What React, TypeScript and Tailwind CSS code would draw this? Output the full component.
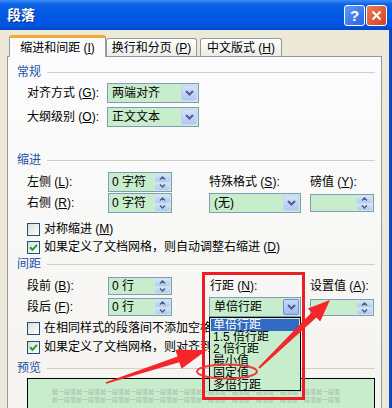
import React from "react";

const FONT = "font-['Liberation_Sans','Noto_Sans_CJK_SC',sans-serif]";

function Key({ k }: { k: string }) {
  return (
    <>
      {" "}(<span className="underline underline-offset-1">{k}</span>)
    </>
  );
}

function Section({ title, className }: { title: string; className: string }) {
  return (
    <div className={`${className} h-[16px] flex items-center pl-[9px] pr-[6px]`}>
      <span className="text-[#1f50a8] leading-none">{title}</span>
      <div className="flex-1 h-px bg-[#d0d0bf] ml-[6px]" />
    </div>
  );
}

function ComboBtn({ active }: { active?: boolean }) {
  return (
    <div
      className={`w-[16px] h-[16px] mr-px rounded-[2px] flex items-center justify-center border ${
        active
          ? "border-[#6f8fd8] bg-[linear-gradient(to_bottom,#c9d8fc,#9fb8f2)]"
          : "border-[#c3d3fb] bg-[linear-gradient(to_bottom,#d6e2fd,#b3c7f6)]"
      }`}
    >
      <svg width="9" height="6" viewBox="0 0 9 6">
        <path d="M1 1 L4.5 4.5 L8 1" stroke="#4d6185" strokeWidth="2" fill="none" />
      </svg>
    </div>
  );
}

function Combo({ value, w, active }: { value: string; w: string; active?: boolean }) {
  return (
    <div className={`${w} h-[20px] flex items-center border border-[#7f9db9] bg-[#c7edcc]`}>
      <span className="flex-1 pl-[4px] leading-none whitespace-nowrap">{value}</span>
      <ComboBtn active={active} />
    </div>
  );
}

function SpinBtn() {
  return (
    <div className="w-[15px] h-full flex flex-col gap-px py-px mr-px">
      <div className="flex-1 rounded-[2px] bg-[linear-gradient(to_bottom,#d6e2fd,#b3c7f6)] flex items-center justify-center">
        <svg width="7" height="4" viewBox="0 0 7 4">
          <path d="M1 3.5 L3.5 1 L6 3.5" stroke="#4d6185" strokeWidth="1.5" fill="none" />
        </svg>
      </div>
      <div className="flex-1 rounded-[2px] bg-[linear-gradient(to_bottom,#d6e2fd,#b3c7f6)] flex items-center justify-center">
        <svg width="7" height="4" viewBox="0 0 7 4">
          <path d="M1 0.5 L3.5 3 L6 0.5" stroke="#4d6185" strokeWidth="1.5" fill="none" />
        </svg>
      </div>
    </div>
  );
}

function Spin({ value, h }: { value: string; h: string }) {
  return (
    <div className={`w-[64px] ${h} flex items-center border border-[#7f9db9] bg-[#c7edcc]`}>
      <span className="flex-1 pl-[3px] leading-none whitespace-pre">{value}</span>
      <SpinBtn />
    </div>
  );
}

function Check({ checked, children, className }: { checked?: boolean; children: React.ReactNode; className: string }) {
  return (
    <div className={`${className} h-[16px] flex items-center pl-[19px]`}>
      <div className="w-[13px] h-[13px] shrink-0 border border-[#1c5180] bg-[linear-gradient(135deg,#dcdcd7,#ffffff)] flex items-center justify-center">
        {checked && (
          <svg width="9" height="9" viewBox="0 0 9 9">
            <path d="M1 4.2 L3.5 6.8 L8 1.8" stroke="#21a121" strokeWidth="2" fill="none" />
          </svg>
        )}
      </div>
      <span className="ml-[4px] leading-none whitespace-nowrap">{children}</span>
    </div>
  );
}

const previewLine = "前一段落".repeat(12);

export default function App() {
  return (
    <div className={`${FONT} relative w-[392px] h-[408px] overflow-hidden bg-[#ece9d8] text-[12px] text-black flex flex-col`}>
      {/* title bar */}
      <div className="h-[30px] shrink-0 flex items-center pl-[7px] pr-[5px] bg-[linear-gradient(to_bottom,#3a8ff7_0%,#0d63e6_14%,#0058e4_50%,#0055e2_85%,#0046cc_100%)]">
        <span className="text-white text-[14px] font-bold [text-shadow:1px_1px_0_#0a2d8a]">段落</span>
        <div className="flex-1" />
        <div className="w-[21px] h-[21px] rounded-[3px] border border-white bg-[linear-gradient(135deg,#5d9bfb,#2a64e0)] flex items-center justify-center text-white text-[15px] font-bold leading-none font-['Liberation_Sans',sans-serif]">
          ?
        </div>
        <div className="w-[21px] h-[21px] ml-px rounded-[3px] border border-white bg-[linear-gradient(135deg,#e97c5c,#d9421b)] flex items-center justify-center">
          <svg width="11" height="11" viewBox="0 0 11 11">
            <path d="M1.5 1.5 L9.5 9.5 M9.5 1.5 L1.5 9.5" stroke="#fff" strokeWidth="2" />
          </svg>
        </div>
      </div>

      <div className="flex-1 flex">
        <div className="flex-1 flex flex-col pl-[7px] pt-[6px]">
          {/* tabs */}
          <div className="h-[20px] flex items-end pl-[2px]">
            <div className="relative z-10 -mb-px w-[97px] h-[22px] rounded-t-[3px] border-x border-[#919b9c] border-t-[3px] border-t-[#f5a830] bg-[#fcfcfe] flex items-center justify-center">
              <span className="leading-none">
                缩进和间距<Key k="I" />
              </span>
            </div>
            <div className="w-[91px] h-[18px] rounded-t-[3px] border border-b-0 border-[#919b9c] bg-[linear-gradient(to_bottom,#ffffff,#ecebe6)] flex items-center justify-center">
              <span className="leading-none">
                换行和分页<Key k="P" />
              </span>
            </div>
            <div className="ml-[3px] w-[82px] h-[18px] rounded-t-[3px] border border-b-0 border-[#919b9c] bg-[linear-gradient(to_bottom,#ffffff,#ecebe6)] flex items-center justify-center">
              <span className="leading-none">
                中文版式<Key k="H" />
              </span>
            </div>
          </div>

          {/* panel */}
          <div className="w-[375px] flex-1 border border-[#919b9c] border-b-0 bg-[linear-gradient(to_bottom,#fcfcfe,#f4f3ee)]">
            <Section title="常规" className="mt-[7px]" />
            <div className="mt-[3px] h-[20px] flex items-center pl-[19px]">
              <span className="w-[80px] leading-none">
                对齐方式<Key k="G" />:
              </span>
              <Combo value="两端对齐" w="w-[92px]" />
            </div>
            <div className="mt-[4px] h-[20px] flex items-center pl-[19px]">
              <span className="w-[80px] leading-none">
                大纲级别<Key k="O" />:
              </span>
              <Combo value="正文文本" w="w-[92px]" />
            </div>

            <Section title="缩进" className="mt-[25px]" />
            <div className="mt-[4px] h-[20px] flex items-center pl-[19px]">
              <span className="w-[81px] leading-none">
                左侧<Key k="L" />:
              </span>
              <Spin value="0 字符" h="h-[20px]" />
              <span className="ml-[37px] w-[101px] leading-none">
                特殊格式<Key k="S" />:
              </span>
              <span className="leading-none">
                磅值<Key k="Y" />:
              </span>
            </div>
            <div className="mt-[1px] h-[20px] flex items-center pl-[19px]">
              <span className="w-[81px] leading-none">
                右侧<Key k="R" />:
              </span>
              <Spin value="0 字符" h="h-[20px]" />
              <div className="ml-[37px]">
                <Combo value="(无)" w="w-[92px]" />
              </div>
              <div className="ml-[9px]">
                <Spin value="" h="h-[18px]" />
              </div>
            </div>
            <Check className="mt-[8px]">
              对称缩进<Key k="M" />
            </Check>
            <Check checked className="mt-[2px]">
              如果定义了文档网格，则自动调整右缩进<Key k="D" />
            </Check>

            <Section title="间距" className="mt-[1px]" />
            <div className="mt-[4px] h-[20px] flex items-center pl-[19px]">
              <span className="w-[81px] leading-none">
                段前<Key k="B" />:
              </span>
              <Spin value="0 行" h="h-[18px]" />
              <span className="ml-[38px] w-[100px] leading-none">
                行距<Key k="N" />:
              </span>
              <span className="leading-none">
                设置值<Key k="A" />:
              </span>
            </div>
            <div className="mt-[1px] h-[20px] flex items-center pl-[19px]">
              <span className="w-[81px] leading-none">
                段后<Key k="F" />:
              </span>
              <Spin value="0 行" h="h-[18px]" />
              <div className="ml-[37px]">
                <Combo value="单倍行距" w="w-[92px]" active />
              </div>
              <div className="ml-[9px]">
                <Spin value="" h="h-[17px]" />
              </div>
            </div>
            <Check className="mt-[3px]">
              在相同样式的段落间不添加空格<Key k="C" />
            </Check>
            <Check checked className="mt-[3px]">
              如果定义了文档网格，则对齐到网格<Key k="W" />
            </Check>

            <Section title="预览" className="mt-[5px]" />
            <div className="mt-[2px] ml-[19px] w-[348px] h-[60px] border border-black bg-[#c7edcc] pt-[9px] pl-[24px]">
              <div className="whitespace-nowrap text-[6px] leading-[8px] text-[#a9b8aa]">{previewLine}</div>
              <div className="whitespace-nowrap text-[6px] leading-[8px] text-[#a9b8aa]">{previewLine}</div>
            </div>
          </div>
        </div>
        <div className="w-[7px]" />
        <div className="w-[3px] bg-[linear-gradient(to_right,#0a55d8,#0841b8)]" />
      </div>

      {/* open dropdown list */}
      <div className="absolute left-[209px] top-[317px] w-[92px] h-[74px] border border-black bg-[#c7edcc] text-[12px] leading-[12px] p-px">
        <div className="h-[12px] bg-[#316ac5] text-white pl-[2px] whitespace-nowrap">单倍行距</div>
        <div className="h-[12px] pl-[2px] whitespace-nowrap">1.5 倍行距</div>
        <div className="h-[12px] pl-[2px] whitespace-nowrap">2 倍行距</div>
        <div className="h-[12px] pl-[2px] whitespace-nowrap">最小值</div>
        <div className="h-[12px] pl-[2px] whitespace-nowrap">固定值</div>
        <div className="h-[12px] pl-[2px] whitespace-nowrap">多倍行距</div>
      </div>

      {/* annotations */}
      <svg className="absolute left-0 top-0 pointer-events-none" width="392" height="408" viewBox="0 0 392 408">
        <rect x="203.5" y="273.5" width="100" height="125" fill="none" stroke="#ee1c24" strokeWidth="3" />
        <ellipse cx="227" cy="371.5" rx="30" ry="7" fill="none" stroke="#f03a3a" strokeWidth="2" />
        <polygon
          points="258.3,367.3 311.6,312.5 307.8,308.5 330,300 320.2,321.5 316.4,317.5 259.7,368.7"
          fill="#f5262a"
        />
        <polygon
          points="105.8,382.2 177.5,356.4 175.3,349.8 207,350 181.5,368.8 179.3,362.2 106.2,383.8"
          fill="#f5262a"
        />
      </svg>
    </div>
  );
}
